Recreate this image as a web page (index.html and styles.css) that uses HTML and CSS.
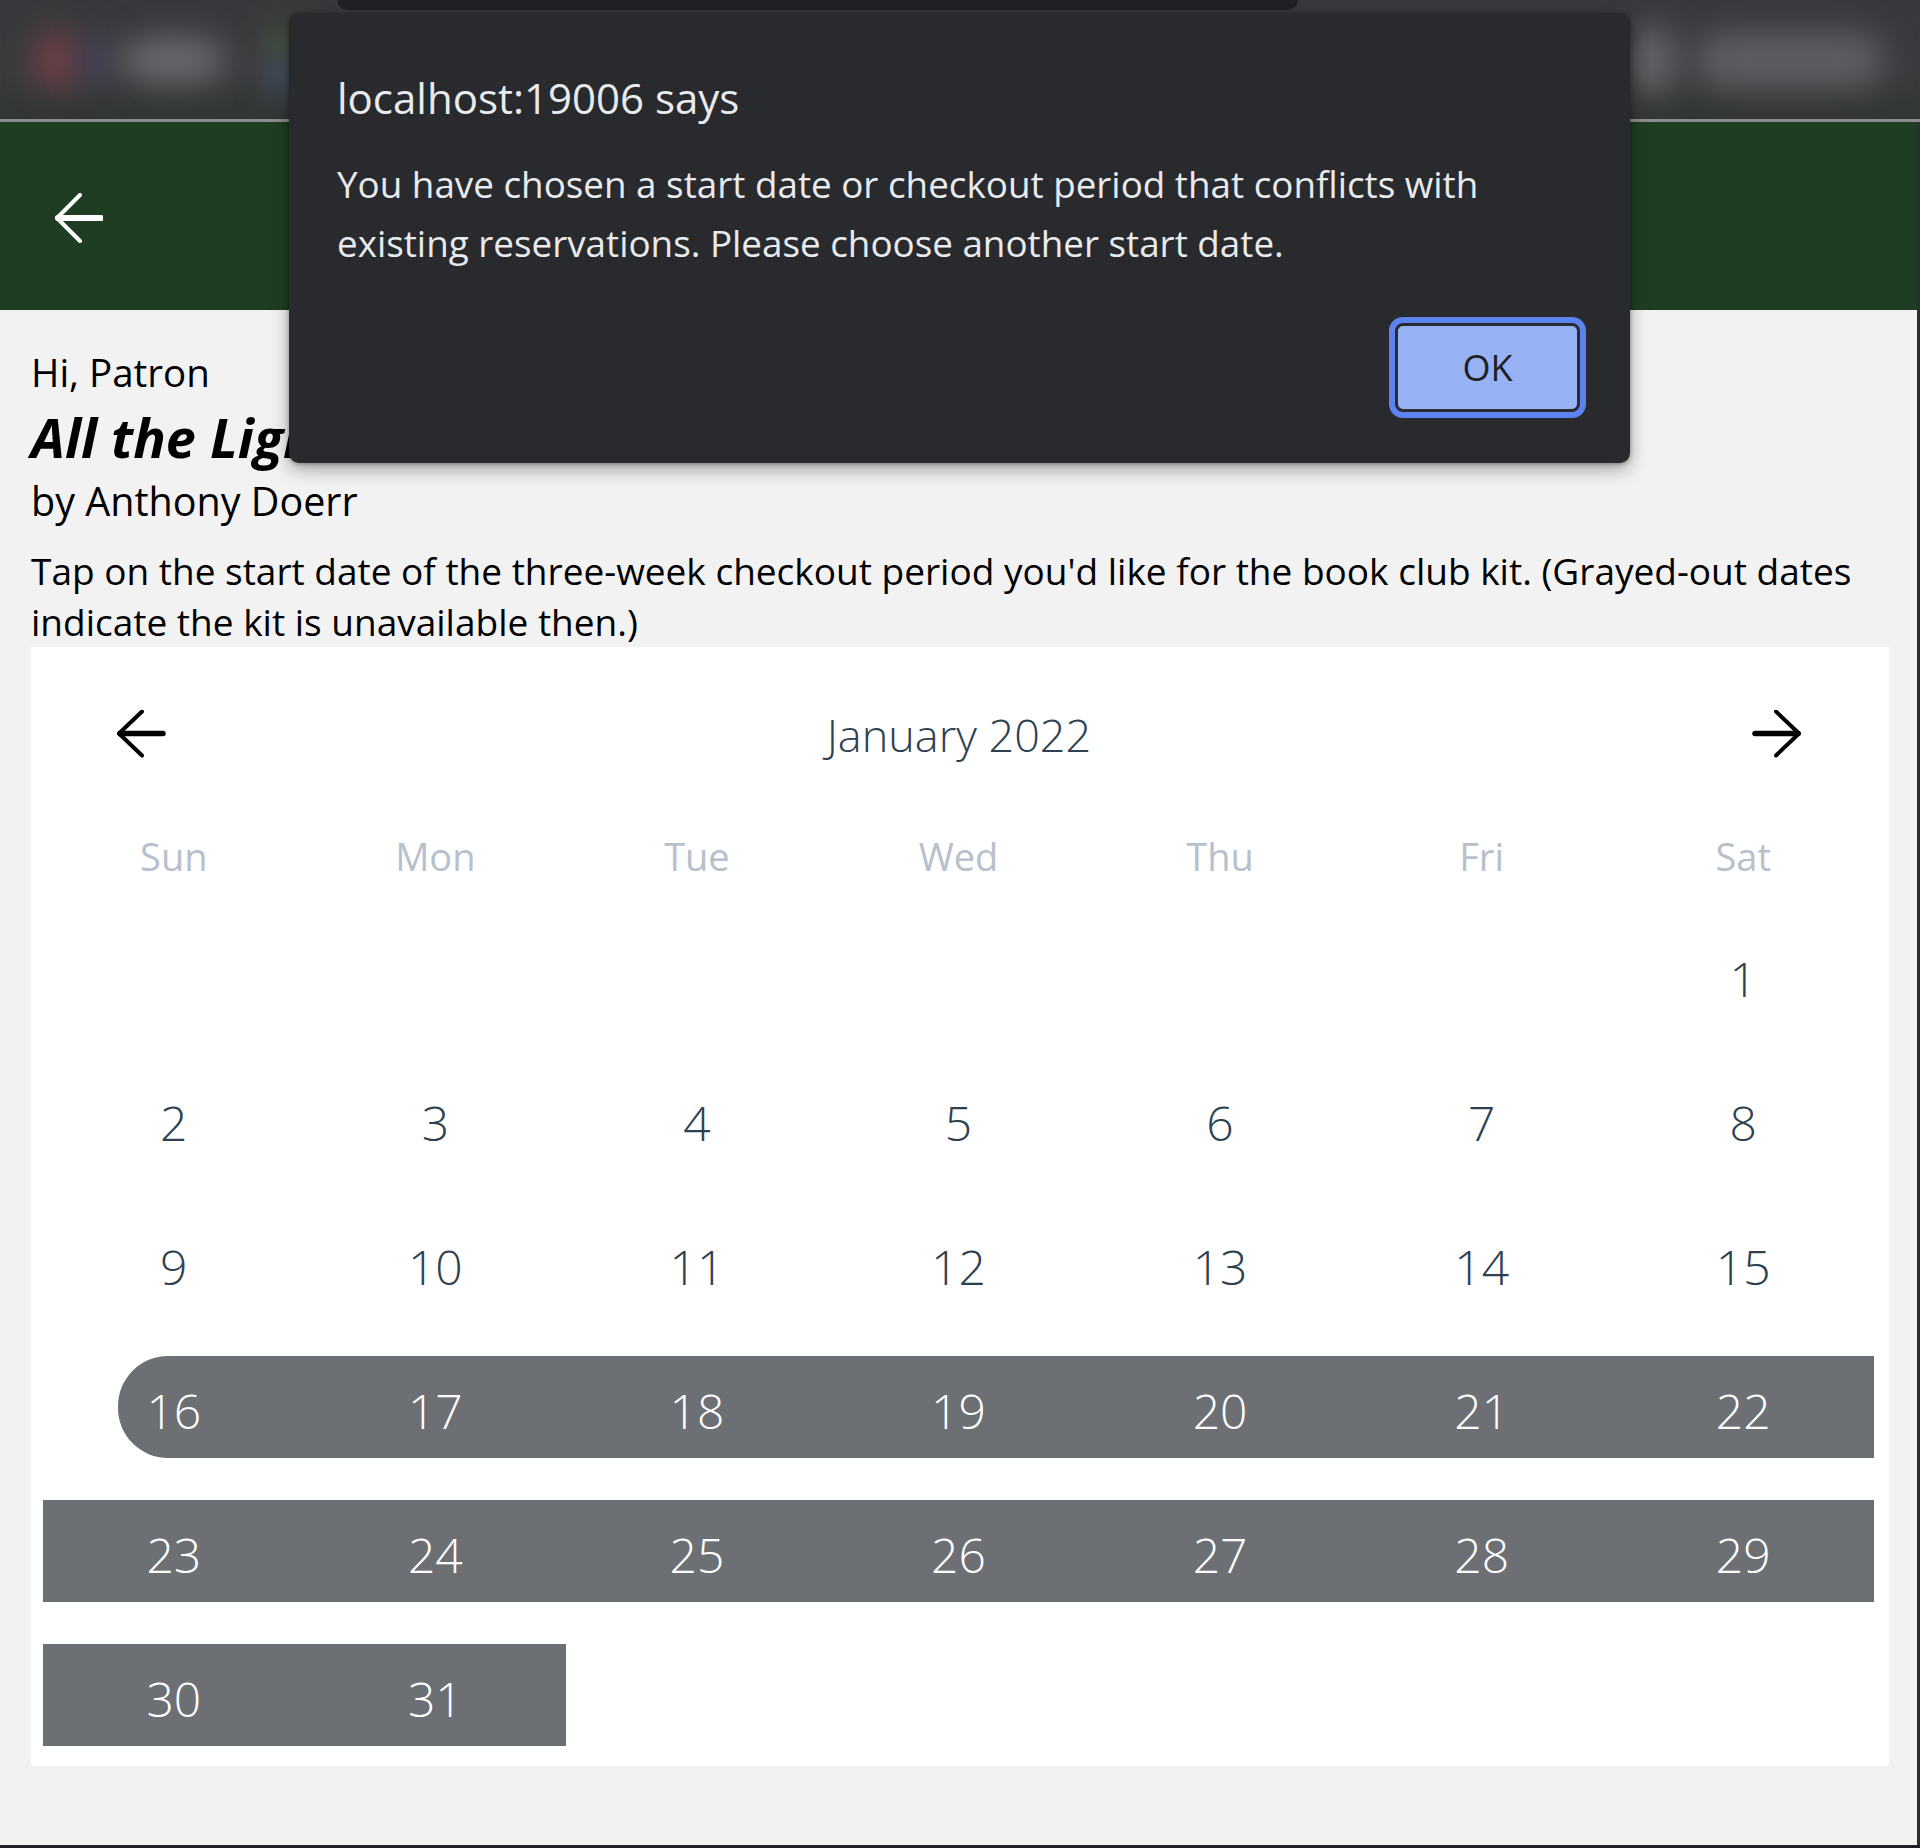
FILE: index.html
```html
<!DOCTYPE html>
<html lang="en">
<head>
<meta charset="utf-8">
<title>Reserve book club kit</title>
<link rel="stylesheet" href="styles.css">
</head>
<body>
  <div class="topbar">
    <div class="blob-group left">
      <span class="blob red"></span>
      <span class="blob purple"></span>
      <span class="blob grey"></span>
      <span class="blob-stack">
        <span class="blob green"></span>
        <span class="blob blue"></span>
      </span>
    </div>
    <div class="pill"></div>
    <div class="blob-group right">
      <span class="blob grey small"></span>
      <span class="blob grey wide"></span>
    </div>
  </div>
  <div class="topline"></div>

  <div class="app">
    <header class="app-header">
      <svg class="back" width="50" height="50" viewBox="0 0 50 50" aria-label="Back">
        <path d="M27 2 L4 25 L27 48" fill="none" stroke="#fff" stroke-width="4" stroke-linecap="round" stroke-linejoin="round"/>
        <path d="M5 25 H48" fill="none" stroke="#fff" stroke-width="6" stroke-linecap="round"/>
      </svg>
    </header>

    <main class="content">
      <p class="greeting">Hi, Patron</p>
      <h1 class="book-title">All the Light We Cannot See</h1>
      <p class="author">by Anthony Doerr</p>
      <p class="instructions">Tap on the start date of the three-week checkout period you'd like for the book club kit. (Grayed-out dates indicate the kit is unavailable then.)</p>

      <section class="calendar">
        <div class="cal-header">
          <svg class="cal-arrow" width="50" height="48" viewBox="0 0 50 48" aria-label="Previous month">
            <path d="M26 1.5 L3 23.5 L26 45.5" fill="none" stroke="#000" stroke-width="4" stroke-linecap="round" stroke-linejoin="round"/>
            <path d="M4 23.5 H47" fill="none" stroke="#000" stroke-width="5.5" stroke-linecap="round"/>
          </svg>
          <div class="month">January 2022</div>
          <svg class="cal-arrow" width="50" height="48" viewBox="0 0 50 48" aria-label="Next month">
            <path d="M24 1.5 L47 23.5 L24 45.5" fill="none" stroke="#000" stroke-width="4" stroke-linecap="round" stroke-linejoin="round"/>
            <path d="M3 23.5 H46" fill="none" stroke="#000" stroke-width="5.5" stroke-linecap="round"/>
          </svg>
        </div>

        <div class="weekdays">
          <span>Sun</span><span>Mon</span><span>Tue</span><span>Wed</span><span>Thu</span><span>Fri</span><span>Sat</span>
        </div>

        <div class="weeks">
          <div class="week">
            <span class="day"></span><span class="day"></span><span class="day"></span><span class="day"></span><span class="day"></span><span class="day"></span><span class="day">1</span>
          </div>
          <div class="week">
            <span class="day">2</span><span class="day">3</span><span class="day">4</span><span class="day">5</span><span class="day">6</span><span class="day">7</span><span class="day">8</span>
          </div>
          <div class="week">
            <span class="day">9</span><span class="day">10</span><span class="day">11</span><span class="day">12</span><span class="day">13</span><span class="day">14</span><span class="day">15</span>
          </div>
          <div class="week">
            <span class="day marked start">16</span><span class="day marked">17</span><span class="day marked">18</span><span class="day marked">19</span><span class="day marked">20</span><span class="day marked">21</span><span class="day marked">22</span>
          </div>
          <div class="week">
            <span class="day marked">23</span><span class="day marked">24</span><span class="day marked">25</span><span class="day marked">26</span><span class="day marked">27</span><span class="day marked">28</span><span class="day marked">29</span>
          </div>
          <div class="week">
            <span class="day marked">30</span><span class="day marked">31</span><span class="day"></span><span class="day"></span><span class="day"></span><span class="day"></span><span class="day"></span>
          </div>
        </div>
      </section>
    </main>
  </div>
  <div class="taskbar"></div>

  <div class="dialog" role="alertdialog">
    <div class="dialog-title">localhost:19006 says</div>
    <div class="dialog-message">You have chosen a start date or checkout period that conflicts with existing reservations. Please choose another start date.</div>
    <div class="dialog-actions">
      <button class="ok-btn">OK</button>
    </div>
  </div>
</body>
</html>
```

FILE: styles.css
```css
* { box-sizing: border-box; }

html, body {
  margin: 0;
  padding: 0;
}

body {
  width: 1920px;
  height: 1848px;
  overflow: hidden;
  background: #f2f2f2;
  font-family: "Open Sans", "Noto Sans", sans-serif;
  color: #000;
  display: flex;
  flex-direction: column;
}

/* ---------- blurred browser toolbar ---------- */
.topbar {
  height: 119px;
  flex: none;
  background: linear-gradient(#38393c 0%, #3a3b3e 60%, #323634 100%);
  display: flex;
  align-items: center;
  overflow: hidden;
}

.blob-group {
  display: flex;
  align-items: center;
}

.blob-group.left {
  width: 337px;
  padding-left: 36px;
}

.blob {
  display: block;
  border-radius: 50%;
  filter: blur(16px);
}

.blob.red { width: 44px; height: 56px; background: #7a4048; }
.blob.purple { width: 36px; height: 56px; background: #474057; margin-left: -4px; }
.blob.grey { width: 110px; height: 46px; background: #6a6b6e; margin-left: 6px; }
.blob-stack { display: flex; flex-direction: column; margin-left: 38px; }
.blob.green { width: 46px; height: 36px; background: #4a5a3f; }
.blob.blue { width: 46px; height: 36px; background: #44536b; margin-top: -6px; }

.pill {
  align-self: flex-start;
  width: 961px;
  height: 10px;
  background: #202124;
  border-radius: 0 0 12px 12px;
}

.blob-group.right {
  margin-left: 330px;
}

.blob.grey.small { width: 50px; height: 70px; background: #636467; margin-left: 0; }
.blob.grey.wide { width: 190px; height: 56px; background: #5d5e61; margin-left: 16px; border-radius: 30px; }

.topline {
  height: 3px;
  flex: none;
  background: #8b8c8e;
}

/* ---------- app ---------- */
.app {
  flex: 1;
  display: flex;
  flex-direction: column;
  border-right: 3px solid #2c2d30;
}

.app-header {
  height: 188px;
  flex: none;
  background: #1f3d22;
  display: flex;
  align-items: center;
  padding-left: 53px;
}

.back { display: block; margin-top: 3px; }

.content {
  padding: 36px 28px 0 31px;
}

.greeting,
.author,
.instructions {
  margin: 0;
  font-size: 38.5px;
  line-height: 52px;
  font-weight: 400;
}

.book-title {
  margin: 0;
  font-size: 54px;
  line-height: 78px;
  font-weight: 700;
  font-style: italic;
  white-space: nowrap;
}

.author {
  margin-top: -1px;
  font-size: 39.5px;
}

.instructions {
  margin-top: 18px;
  font-size: 37px;
  line-height: 51px;
}

/* ---------- calendar ---------- */
.calendar {
  background: #fff;
  margin-top: 0;
  padding: 37px 0 20px;
}

.cal-header {
  height: 100px;
  display: flex;
  align-items: center;
  justify-content: space-between;
  padding: 0 87px 0 85px;
}

.cal-arrow { display: block; }

.month {
  font-size: 45px;
  font-weight: 300;
  color: #2d4150;
  line-height: 100px;
  padding-top: 2px;
}

.weekdays,
.week {
  display: grid;
  grid-template-columns: repeat(7, 1fr);
  padding: 0 15px 0 12px;
}

.weekdays {
  margin-top: 42px;
  height: 60px;
  align-items: center;
}

.weekdays span {
  text-align: center;
  font-size: 38px;
  font-weight: 400;
  color: #b6c1cd;
  line-height: 60px;
}

.weeks {
  margin-top: 38px;
  display: flex;
  flex-direction: column;
  gap: 42px;
}

.week { height: 102px; }

.day {
  display: flex;
  align-items: center;
  justify-content: center;
  padding-top: 6px;
  font-size: 48px;
  font-weight: 300;
  color: #2d4150;
}

.day.marked {
  background: #6c6f74;
  color: #fff;
}

.day.start {
  margin-left: 75px;
  padding-right: 75px;
  border-radius: 50px 0 0 50px;
}

/* ---------- alert dialog ---------- */
.dialog {
  position: absolute;
  left: 289px;
  top: 13px;
  width: 1341px;
  height: 450px;
  background: #292a2d;
  border-radius: 10px;
  box-shadow: 0 6px 18px rgba(0, 0, 0, 0.35), 0 1px 4px rgba(0, 0, 0, 0.3);
  padding: 55px 44px 0 48px;
  color: #e8eaed;
  display: flex;
  flex-direction: column;
}

.dialog-title {
  font-size: 42px;
  line-height: 60px;
}

.dialog-message {
  margin-top: 27px;
  font-size: 36.8px;
  line-height: 58.5px;
  padding-right: 40px;
}

.dialog-actions {
  margin-top: 51px;
  display: flex;
  justify-content: flex-end;
}

.ok-btn {
  width: 185px;
  height: 89px;
  margin-right: 6px;
  border: 3px solid #2b2c30;
  border-radius: 8px;
  background: #97b3f5;
  box-shadow: 0 0 0 6px #5d84ee;
  font-family: "Open Sans", "Noto Sans", sans-serif;
  font-size: 36px;
  color: #202124;
  padding: 0;
}

.taskbar {
  height: 3px;
  flex: none;
  background: #202124;
}
```
